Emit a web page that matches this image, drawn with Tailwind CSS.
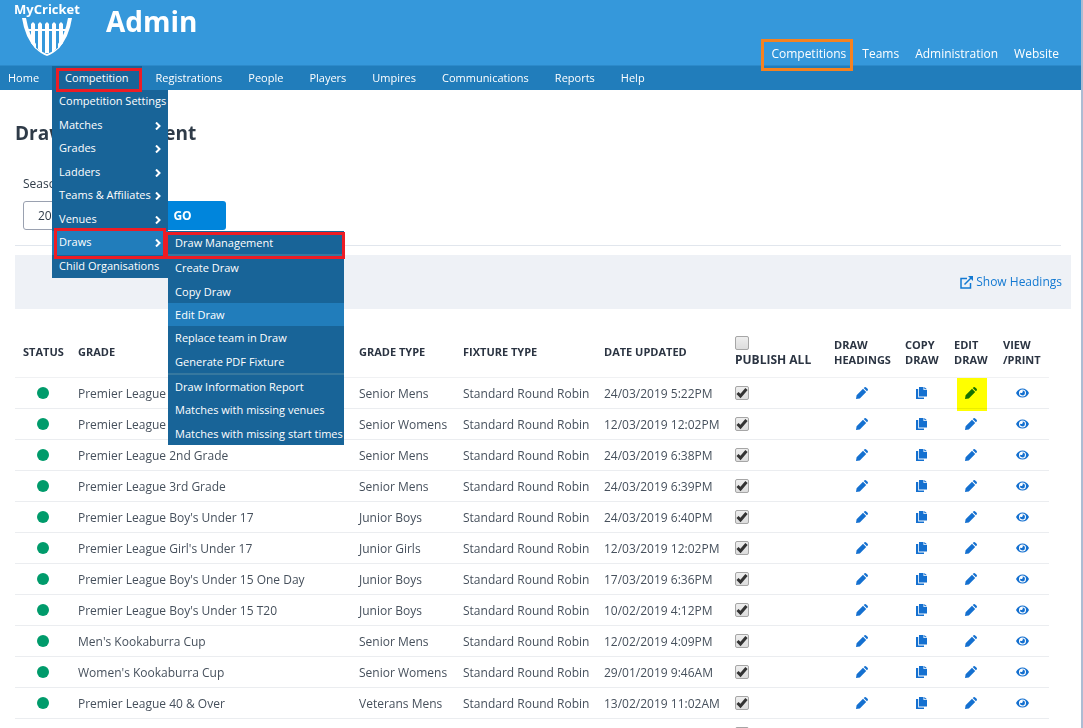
<!DOCTYPE html>
<html lang="en">

<head>
	<meta charset="UTF-8">
	<meta name="viewport" content="width=device-width, initial-scale=1.0">
	<title>MyCricket Admin - Draw Management</title>
	<script src="https://cdn.jsdelivr.net/npm/@tailwindcss/browser@4"></script>
</head>

<body class="h-screen overflow-hidden bg-white border-r-2 border-[#adbcd3] font-['Open_Sans',sans-serif] text-xs text-[#2f3b48]">
	<!-- Header -->
	<header class="flex h-[66px] items-stretch bg-[#3598db] text-white border-b border-[#2c8aca]">
		<a href="#" class="ml-3 flex w-[70px] flex-col items-center" aria-label="MyCricket home">
			<span class="text-[13px] leading-[18px] font-bold">MyCricket</span>
			<svg class="h-[38px] w-[50px]" viewBox="0 0 50 38" fill="#fff">
				<path d="M0 0H4Q7 17 14 26V31Q3 20 0 0ZM50 0H46Q43 17 36 26V31Q47 20 50 0Z" />
				<path d="M5 11H45V13H5Z" />
				<path d="M9 22V6L11 4L13 6V30L9 25ZM16 31V6L18 4L20 6V35ZM23 35V6L25 4L27 6V35ZM30 35V6L32 4L34 6V31ZM37 30V6L39 4L41 6V25Z" />
				<path d="M11 27Q17 33 25 36Q33 33 39 27L37 30Q31 36 25 38Q19 36 13 30Z" />
			</svg>
		</a>
		<h1 class="ml-6 pt-[3px] text-[28px] leading-9 font-bold">Admin</h1>
		<nav class="ml-auto mr-[14px] flex items-end pb-[2px]" aria-label="Sections">
			<a href="#" class="relative px-2 leading-[18px]">Competitions<span class="absolute -left-[2px] right-px -top-[6px] -bottom-2 z-10 border-3 border-[#f58220]"></span></a>
			<a href="#" class="px-2 leading-[18px]">Teams</a>
			<a href="#" class="px-2 leading-[18px]">Administration</a>
			<a href="#" class="px-2 leading-[18px]">Website</a>
		</nav>
	</header>

	<!-- Main menu -->
	<nav class="flex h-6 bg-[#217dbb] text-[11px] leading-6 text-white" aria-label="Main menu">
		<a href="#" class="pl-2 pr-[13px]">Home</a>
		<div class="relative z-20 bg-[#186498]">
			<a href="#" class="block px-[13px]">Competition</a>
			<span class="absolute left-1 right-0 top-[2px] -bottom-[2px] z-10 border-3 border-[#ed1c24]"></span>
			<ul class="absolute left-0 top-6 flex h-[188px] w-[116px] flex-col bg-[#186498] leading-[22px] whitespace-nowrap">
				<li class="flex-1 px-[7px]"><a href="#">Competition Settings</a></li>
				<li class="flex flex-1 items-start justify-between px-[7px]"><a href="#">Matches</a><svg class="mt-2 h-2 w-[6px]" viewBox="0 0 6 8" fill="none" stroke="#fff" stroke-width="2"><path d="M1 0.5L4.5 4L1 7.5" /></svg></li>
				<li class="flex flex-1 items-start justify-between px-[7px]"><a href="#">Grades</a><svg class="mt-2 h-2 w-[6px]" viewBox="0 0 6 8" fill="none" stroke="#fff" stroke-width="2"><path d="M1 0.5L4.5 4L1 7.5" /></svg></li>
				<li class="flex flex-1 items-start justify-between px-[7px]"><a href="#">Ladders</a><svg class="mt-2 h-2 w-[6px]" viewBox="0 0 6 8" fill="none" stroke="#fff" stroke-width="2"><path d="M1 0.5L4.5 4L1 7.5" /></svg></li>
				<li class="flex flex-1 items-start justify-between px-[7px]"><a href="#">Teams &amp; Affiliates</a><svg class="mt-2 h-2 w-[6px]" viewBox="0 0 6 8" fill="none" stroke="#fff" stroke-width="2"><path d="M1 0.5L4.5 4L1 7.5" /></svg></li>
				<li class="flex flex-1 items-start justify-between px-[7px]"><a href="#">Venues</a><svg class="mt-2 h-2 w-[6px]" viewBox="0 0 6 8" fill="none" stroke="#fff" stroke-width="2"><path d="M1 0.5L4.5 4L1 7.5" /></svg></li>
				<li class="relative flex flex-1 items-start justify-between bg-[#217dbb] px-[7px]">
					<a href="#">Draws</a><svg class="mt-2 h-2 w-[6px]" viewBox="0 0 6 8" fill="none" stroke="#fff" stroke-width="2"><path d="M1 0.5L4.5 4L1 7.5" /></svg>
					<span class="absolute left-[2px] right-[2px] -top-[3px] -bottom-1 z-10 border-3 border-[#ed1c24]"></span>
					<ul class="absolute left-full top-0 flex h-[214px] w-[176px] flex-col bg-[#186498] leading-[23px]">
						<li class="relative flex-1 px-[7px]"><a href="#">Draw Management</a><span class="absolute -left-[3px] -right-px top-px -bottom-[5px] z-10 border-3 border-[#ed1c24]"></span></li>
						<li class="h-[2px] bg-[#36789f]" role="separator"></li>
						<li class="flex-1 px-[7px]"><a href="#">Create Draw</a></li>
						<li class="flex-1 px-[7px]"><a href="#">Copy Draw</a></li>
						<li class="flex-1 bg-[#217dbb] px-[7px]"><a href="#">Edit Draw</a></li>
						<li class="flex-1 px-[7px]"><a href="#">Replace team in Draw</a></li>
						<li class="flex-1 px-[7px]"><a href="#">Generate PDF Fixture</a></li>
						<li class="h-[2px] bg-[#36789f]" role="separator"></li>
						<li class="flex-1 px-[7px]"><a href="#">Draw Information Report</a></li>
						<li class="flex-1 px-[7px]"><a href="#">Matches with missing venues</a></li>
						<li class="flex-1 px-[7px]"><a href="#">Matches with missing start times</a></li>
					</ul>
				</li>
				<li class="flex-1 px-[7px]"><a href="#">Child Organisations</a></li>
			</ul>
		</div>
		<a href="#" class="pl-[14px] pr-[13px]">Registrations</a>
		<a href="#" class="px-[13px]">People</a>
		<a href="#" class="px-[13px]">Players</a>
		<a href="#" class="px-[13px]">Umpires</a>
		<a href="#" class="px-[13px]">Communications</a>
		<a href="#" class="px-[13px]">Reports</a>
		<a href="#" class="px-[13px]">Help</a>
	</nav>

	<main class="pl-[15px] pr-[10px]">
		<h2 class="pt-[29px] text-[19px] leading-7 font-bold">Draw Management</h2>
		<form class="mr-[10px] border-b border-[#e1e6ed] px-2 pt-7 pb-[15px]">
			<label for="season" class="block leading-[18px]">Season</label>
			<div class="mt-2 flex gap-2">
				<select id="season" class="h-[29px] w-[108px] appearance-none rounded-[3px] border border-[#9aa1b0] bg-white px-[14px] text-xs">
					<option>2018/19</option>
				</select>
				<button type="button" class="h-[29px] w-[87px] rounded-[3px] bg-[#0085dc] text-xs font-bold text-white">GO</button>
			</div>
		</form>

		<div class="mt-[9px] flex h-[54px] items-center justify-end bg-[#eef1f6] pr-[9px]">
			<a href="#" class="flex items-center gap-[3px] text-xs text-[#1379d2]">
				<svg class="h-[13px] w-[13px]" viewBox="0 0 13 13" fill="none" stroke="currentColor" stroke-width="1.5"><path d="M7 2.5H1V12H10.5V7M4.5 8.5L11 2" /><path d="M8 0H13V5Z" fill="currentColor" stroke="none" /></svg>
				Show Headings
			</a>
		</div>

		<div class="pr-[22px]">
			<table class="w-full table-fixed text-left text-[#46505c]">
				<colgroup>
					<col class="w-[55px]">
					<col>
					<col class="w-[104px]">
					<col class="w-[141px]">
					<col class="w-[131px]">
					<col class="w-[99px]">
					<col class="w-[71px]">
					<col class="w-[49px]">
					<col class="w-[49px]">
					<col class="w-[54px]">
				</colgroup>
				<thead class="text-[11px] leading-[15px] text-[#2b3442]">
					<tr class="h-[68px] border-b border-[#f0f1f3]">
						<th class="pl-2 pt-[18px]">STATUS</th>
						<th class="pl-2 pt-[18px]">GRADE</th>
						<th class="pl-2 pt-[18px]">GRADE TYPE</th>
						<th class="pl-2 pt-[18px]">FIXTURE TYPE</th>
						<th class="pl-2 pt-[18px]">DATE UPDATED</th>
						<th class="pl-2 pt-[18px] text-xs">
							<input id="publishAll" type="checkbox" class="block h-[14px] w-[14px] appearance-none rounded-[2px] border border-[#a6a6a6] bg-linear-to-b from-[#eee] to-[#ddd]">
							<label for="publishAll" class="block pt-[2px] leading-[15px] whitespace-nowrap">PUBLISH ALL</label>
						</th>
						<th class="pl-2 pt-[18px]">DRAW HEADINGS</th>
						<th class="pl-2 pt-[18px]">COPY DRAW</th>
						<th class="pl-2 pt-[18px]">EDIT DRAW</th>
						<th class="pl-2 pt-[18px]">VIEW<br>/PRINT</th>
					</tr>
				</thead>
				<tbody id="draws"></tbody>
			</table>
		</div>
	</main>

	<script>
		const draws = [
			['Premier League 1st Grade', 'Senior Mens', '24/03/2019 5:22PM'],
			['Premier League Women\'s', 'Senior Womens', '12/03/2019 12:02PM'],
			['Premier League 2nd Grade', 'Senior Mens', '24/03/2019 6:38PM'],
			['Premier League 3rd Grade', 'Senior Mens', '24/03/2019 6:39PM'],
			['Premier League Boy\'s Under 17', 'Junior Boys', '24/03/2019 6:40PM'],
			['Premier League Girl\'s Under 17', 'Junior Girls', '12/03/2019 12:02PM'],
			['Premier League Boy\'s Under 15 One Day', 'Junior Boys', '17/03/2019 6:36PM'],
			['Premier League Boy\'s Under 15 T20', 'Junior Boys', '10/02/2019 4:12PM'],
			['Men\'s Kookaburra Cup', 'Senior Mens', '12/02/2019 4:09PM'],
			['Women\'s Kookaburra Cup', 'Senior Womens', '29/01/2019 9:46AM'],
			['Premier League 40 & Over', 'Veterans Mens', '13/02/2019 11:02AM'],
			['', '', '']
		];
		const pencil = '<svg class="h-3 w-3" viewBox="0 0 12 12" fill="currentColor"><path d="M0 12L0.6 8.2L7 1.8L10.2 5L3.8 11.4ZM7.7 1.1L8.6 0.3Q9.4-0.3 10.2 0.4L11.6 1.8Q12.3 2.6 11.7 3.4L10.9 4.3Z"/></svg>';
		const copy = '<svg class="h-3 w-[11px]" viewBox="0 0 11 12" fill="currentColor"><path d="M3 0H7.5V3H11V9.5H3ZM8.3 0L11 2.3H8.3ZM0 2H2.2V10.5H8V12H0Z"/></svg>';
		const eye = '<svg class="h-[10px] w-[13px]" viewBox="0 0 13 10" fill="currentColor"><path fill-rule="evenodd" d="M6.5 0.5Q10.8 0.5 13 5Q10.8 9.5 6.5 9.5Q2.2 9.5 0 5Q2.2 0.5 6.5 0.5ZM6.5 1.5A3.5 3.5 0 1 0 6.5 8.5A3.5 3.5 0 1 0 6.5 1.5Z"/><path d="M6.5 2.6A2.4 2.4 0 1 1 4.2 4.4A1.4 1.4 0 0 0 6.5 2.6Z"/></svg>';
		const highlight = '<span class="absolute left-[11px] top-0 h-[33px] w-[30px] bg-[#ff0] mix-blend-multiply"></span>';

		document.getElementById('draws').innerHTML = draws.map(([grade, type, updated], i) => `
			<tr class="h-[31px] border-b border-[#ebedf0]">
				<td><span class="mx-auto block h-3 w-3 rounded-full bg-[#009b6b]"></span></td>
				<td class="pt-[2px] pl-2 whitespace-nowrap">${grade.replace('&', '&amp;')}</td>
				<td class="pt-[2px] pl-2 whitespace-nowrap">${type}</td>
				<td class="pt-[2px] pl-2 whitespace-nowrap">${grade ? 'Standard Round Robin' : ''}</td>
				<td class="pt-[2px] pl-2 whitespace-nowrap">${updated}</td>
				<td class="pl-2">
					<label class="relative block h-[14px] w-[14px]">
						<input type="checkbox" checked aria-label="Publish" class="peer block h-[14px] w-[14px] appearance-none rounded-[2px] border border-[#a6a6a6] bg-linear-to-b from-[#eee] to-[#ddd]">
						<svg class="absolute inset-0 hidden peer-checked:block" viewBox="0 0 14 14" fill="none" stroke="#333" stroke-width="3"><path d="M2.5 7L5.5 10L11.5 3"/></svg>
					</label>
				</td>
				<td class="text-[#1470d0]"><a href="#" aria-label="Draw headings" class="flex justify-center">${pencil}</a></td>
				<td class="text-[#1470d0]"><a href="#" aria-label="Copy draw" class="flex justify-center">${copy}</a></td>
				<td class="relative text-[#1470d0]"><a href="#" aria-label="Edit draw" class="flex justify-center">${pencil}</a>${i === 0 ? highlight : ''}</td>
				<td class="text-[#1470d0]"><a href="#" aria-label="View or print" class="flex justify-center">${eye}</a></td>
			</tr>`).join('');
	</script>
</body>

</html>
